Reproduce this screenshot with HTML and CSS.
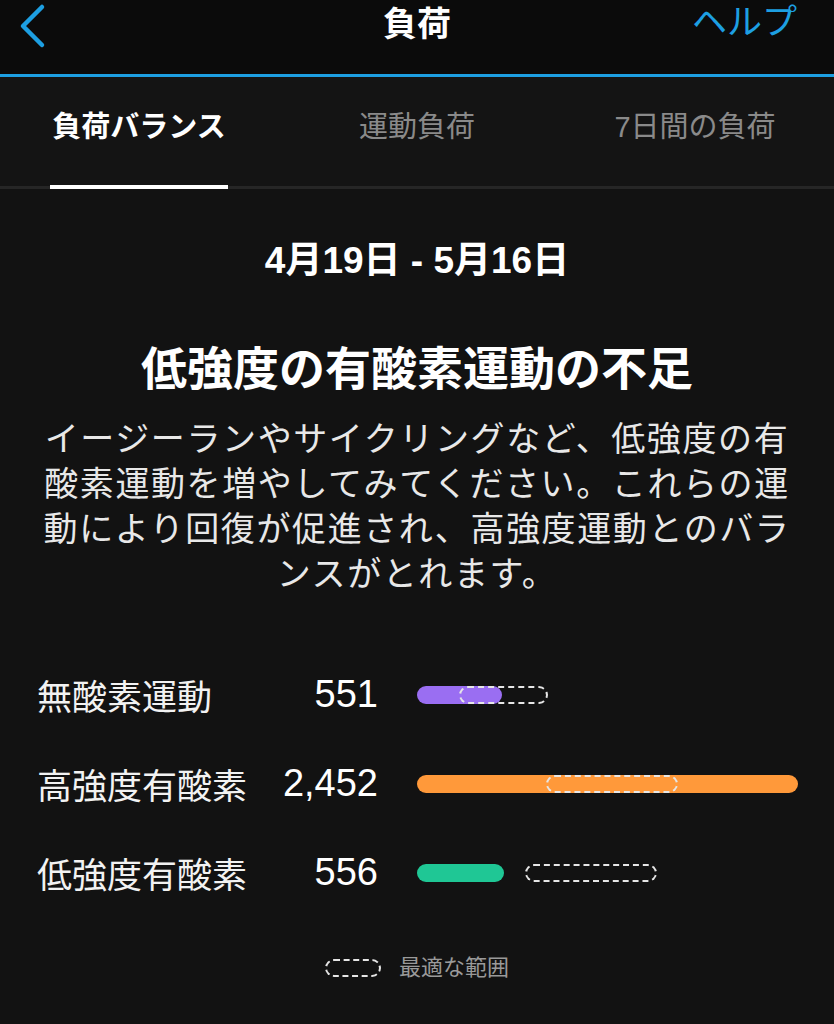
FILE: index.html
```html
<!DOCTYPE html>
<html lang="ja">
    <head>
        <meta charset="UTF-8">
        <meta name="viewport" content="width=device-width, initial-scale=1.0">
        <title>負荷</title>
        <link rel="stylesheet" href="styles.css">
    </head>
    <body>
        <header class="topbar">
            <div class="back">
                <svg width="30" height="48" viewBox="0 0 30 48">
                    <polyline points="24,4 5,23 24,42" fill="none" stroke="#1d9fe2" stroke-width="4.5" stroke-linecap="round" stroke-linejoin="round"/>
                </svg>
            </div>
            <div class="title">負荷</div>
            <div class="help">ヘルプ</div>
        </header>

        <nav class="tabs">
            <div class="tab active"><span>負荷バランス</span></div>
            <div class="tab"><span>運動負荷</span></div>
            <div class="tab"><span>7日間の負荷</span></div>
        </nav>

        <main class="content">
            <div class="period">4月19日 - 5月16日</div>
            <h1 class="status">低強度の有酸素運動の不足</h1>
            <p class="advice">イージーランやサイクリングなど、低強度の有酸素運動を増やしてみてください。これらの運動により回復が促進され、高強度運動とのバランスがとれます。</p>

            <div class="rows">
                <div class="row">
                    <div class="label">無酸素運動</div>
                    <div class="value">551</div>
                    <div class="track">
                        <div class="fill purple" style="width: 85px"></div>
                        <div class="range" style="left: 42px; width: 89px"></div>
                    </div>
                </div>
                <div class="row">
                    <div class="label">高強度有酸素</div>
                    <div class="value">2,452</div>
                    <div class="track">
                        <div class="fill orange" style="width: 381px"></div>
                        <div class="range" style="left: 129px; width: 132px"></div>
                    </div>
                </div>
                <div class="row">
                    <div class="label">低強度有酸素</div>
                    <div class="value">556</div>
                    <div class="track">
                        <div class="fill green" style="width: 87px"></div>
                        <div class="range" style="left: 108px; width: 132px"></div>
                    </div>
                </div>
            </div>

            <div class="legend">
                <span class="legend-mark"></span>
                <span>最適な範囲</span>
            </div>
        </main>
    </body>
</html>
```

FILE: styles.css
```css
body {
    margin: 0;
    background: #121212;
    color: #ffffff;
    font-family: "Liberation Sans", "Noto Sans CJK JP", sans-serif;
    width: 834px;
    height: 1024px;
    overflow: hidden;
}

.topbar {
    height: 71px;
    background: #0b0b0b;
    border-bottom: 3px solid #1d9fe2;
    display: grid;
    grid-template-columns: 1fr auto 1fr;
    align-items: start;
    padding: 3px 37px 0 18px;
}

.title {
    font-size: 34px;
    font-weight: bold;
    line-height: 42px;
    margin-left: 19px;
}

.help {
    justify-self: end;
    color: #1d9fe2;
    font-size: 35px;
    line-height: 38px;
}

.tabs {
    display: grid;
    grid-template-columns: 1fr 1fr 1fr;
    height: 109px;
    background: #141414;
    border-bottom: 3px solid #262626;
}

.tab {
    display: flex;
    justify-content: center;
    align-items: flex-end;
    color: #8a8a8a;
    font-size: 29px;
}

.tab span {
    line-height: 34px;
    padding: 0 2px 41px;
    border-bottom: 4px solid transparent;
    margin-bottom: -3px;
}

.tab.active {
    color: #ffffff;
    font-weight: bold;
}

.tab.active span {
    border-bottom-color: #ffffff;
}

.content {
    display: flex;
    flex-direction: column;
    align-items: center;
}

.period {
    margin-top: 51px;
    font-size: 37px;
    font-weight: bold;
    line-height: 42px;
}

.status {
    margin: 58px 0 0;
    font-size: 46px;
    line-height: 58px;
}

.advice {
    margin: 19px 0 0;
    width: 760px;
    font-size: 34px;
    line-height: 45px;
    letter-spacing: 1.6px;
    text-align: center;
    color: #e8e8e8;
}

.rows {
    margin-top: 53px;
    width: 100%;
}

.row {
    display: grid;
    grid-template-columns: 230px 111px 420px;
    align-items: center;
    height: 89px;
    padding-left: 37px;
    font-size: 35px;
}

.label {
    color: #f2f2f2;
}

.value {
    text-align: right;
    font-size: 38px;
}

.track {
    position: relative;
    height: 18px;
    margin-left: 39px;
}

.fill {
    height: 18px;
    border-radius: 9px;
}

.purple {
    background: #9a6ef2;
}

.orange {
    background: #ff993a;
}

.green {
    background: #1fc795;
}

.range {
    position: absolute;
    top: 0;
    box-sizing: border-box;
    height: 18px;
    border: 2px dashed #e6e6e6;
    border-radius: 9px;
}

.legend {
    margin-top: 36px;
    display: flex;
    align-items: center;
    gap: 18px;
    color: #9a9a9a;
    font-size: 22px;
    line-height: 30px;
}

.legend-mark {
    box-sizing: border-box;
    width: 56px;
    height: 18px;
    border: 2px dashed #e6e6e6;
    border-radius: 10px;
}
```
